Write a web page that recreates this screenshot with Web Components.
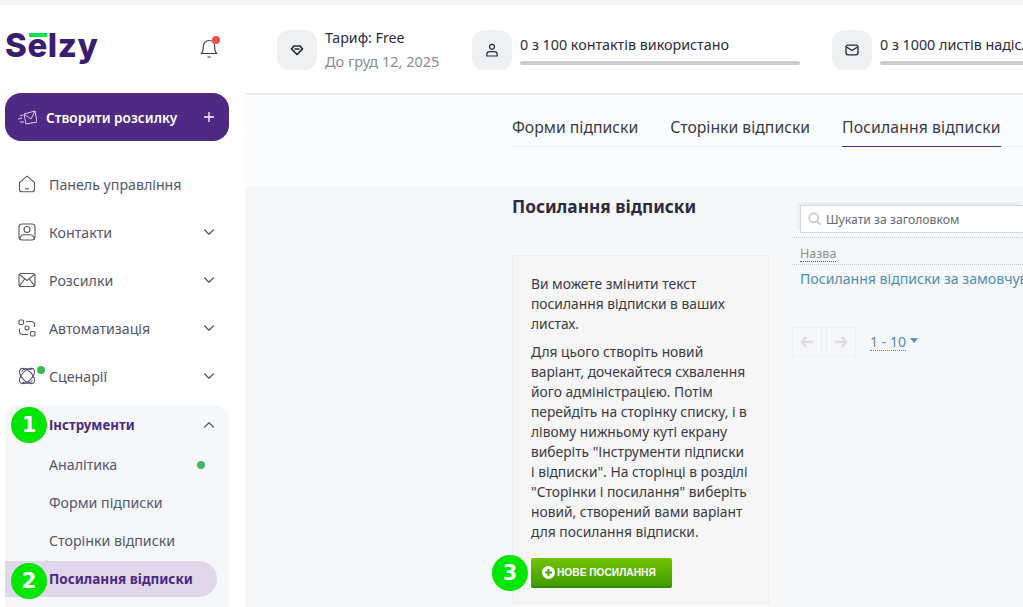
<!DOCTYPE html>
<html lang="uk">
<head>
<meta charset="UTF-8">
<title>Selzy</title>
<style>
    html, body { margin: 0; padding: 0; height: 100%; overflow: hidden; background: #fff; }
    body { font-family: "Noto Sans", "Liberation Sans", sans-serif; color: #2b2b3d; }
</style>
</head>
<body>
<app-shell>
    <side-bar slot="side">
        <nav-item slot="nav" chevron="none" label="Панель управління">
            <svg slot="icon" width="18" height="18" viewBox="0 0 18 18" fill="none" stroke="#55566a" stroke-width="1.1"><path d="M1.500 7.600 9 1.200l7.500 6.400v6.600a2.600 2.600 0 0 1-2.600 2.600H4.100a2.600 2.600 0 0 1-2.600-2.600Z"/><path d="M7 13.800h4"/></svg>
        </nav-item>
        <nav-item slot="nav" chevron="down" label="Контакти">
            <svg slot="icon" width="18" height="18" viewBox="0 0 18 18" fill="none" stroke="#55566a" stroke-width="1.1"><rect x="1" y="1" width="16" height="16" rx="3"/><circle cx="9" cy="6.500" r="3"/><path d="M2 15.500c.5-3 2.500-3.800 4-3.800h6c1.500 0 3.500.8 4 3.800"/></svg>
        </nav-item>
        <nav-item slot="nav" chevron="down" label="Розсилки">
            <svg slot="icon" width="18" height="18" viewBox="0 0 18 18" fill="none" stroke="#55566a" stroke-width="1.1"><rect x="1" y="2.500" width="16" height="13" rx="2"/><path d="m1.500 3.500 7.500 6 7.500-6M1.500 14.800 6.600 8M16.500 14.800 11.400 8"/></svg>
        </nav-item>
        <nav-item slot="nav" chevron="down" label="Автоматизація">
            <svg slot="icon" width="18" height="18" viewBox="0 0 18 18" fill="none" stroke="#55566a" stroke-width="1.1"><rect x="1" y="1" width="4.500" height="4.500" rx="1.200"/><rect x="12.500" y="12.500" width="4.500" height="4.500" rx="1.200"/><circle cx="9" cy="9" r="2"/><path d="M8 2.500h5.500a3 3 0 0 1 3 3V8M10 15.500H4.500a3 3 0 0 1-3-3V9.500"/></svg>
        </nav-item>
        <nav-item slot="nav" chevron="down" label="Сценарії" mark>
            <svg slot="icon" width="18" height="18" viewBox="0 0 18 18" fill="none" stroke="#55566a" stroke-width="1.1"><ellipse cx="9" cy="9" rx="9.500" ry="5" transform="rotate(45 9 9)"/><ellipse cx="9" cy="9" rx="9.500" ry="5" transform="rotate(-45 9 9)"/><path d="M3.500 4.500A7.500 7.500 0 0 1 13.500 3M14.500 13.500A7.500 7.500 0 0 1 4.500 15"/></svg>
        </nav-item>
        <nav-group slot="nav" label="Інструменти">
            <sub-item dot>Аналітика</sub-item>
            <sub-item>Форми підписки</sub-item>
            <sub-item>Сторінки відписки</sub-item>
            <sub-item active>Посилання відписки</sub-item>
        </nav-group>
    </side-bar>

    <top-bar slot="top">
        <plan-stat title-text="Тариф: Free" sub="До груд 12, 2025">
            <svg slot="icon" width="14" height="14" viewBox="0 0 14 14" fill="none" stroke="#24243a" stroke-width="1.700" stroke-linejoin="round"><path d="M4 3h6l2.500 3L7 11.500 1.500 6Z"/><path d="M4.500 6h5" stroke-width="1.500"/></svg>
        </plan-stat>
        <usage-stat text="0 з 100 контактів використано" style="margin-left:32px">
            <svg slot="icon" width="14" height="14" viewBox="0 0 14 14" fill="none" stroke="#24243a" stroke-width="1.200"><circle cx="7" cy="3.800" r="2.500"/><path d="M1.800 13v-1.500c0-1.700 1.300-2.800 3-2.800h4.400c1.700 0 3 1.100 3 2.800V13Z"/></svg>
        </usage-stat>
        <usage-stat text="0 з 1000 листів надіслано" style="margin-left:32px">
            <svg slot="icon" width="14" height="14" viewBox="0 0 14 14" fill="none" stroke="#24243a" stroke-width="1.300"><rect x="1" y="2.200" width="12" height="9.600" rx="2"/><path d="m1.500 4 5.500 3.500L12.500 4"/></svg>
        </usage-stat>
    </top-bar>

    <tab-strip slot="tabs">
        <tab-link>Форми підписки</tab-link>
        <tab-link>Сторінки відписки</tab-link>
        <tab-link active>Посилання відписки</tab-link>
    </tab-strip>

    <help-panel slot="left" heading="Посилання відписки">
        <p>Ви можете змінити текст<br>посилання відписки в ваших<br>листах.</p>
        <p>Для цього створіть новий<br>варіант, дочекайтеся схвалення<br>його адміністрацією. Потім<br>перейдіть на сторінку списку, і в<br>лівому нижньому куті екрану<br>виберіть "Інструменти підписки<br>і відписки". На сторінці в розділі<br>"Сторінки і посилання" виберіть<br>новий, створений вами варіант<br>для посилання відписки.</p>
        <green-button>НОВЕ ПОСИЛАННЯ</green-button>
    </help-panel>

    <link-table slot="right"></link-table>

    <step-mark slot="marks" n="1" style="left:11px;top:407px"></step-mark>
    <step-mark slot="marks" n="2" style="left:11px;top:563px"></step-mark>
    <step-mark slot="marks" n="3" style="left:492px;top:555px"></step-mark>
</app-shell>

<script>
    function define(name, css, html) {
        customElements.define(name, class extends HTMLElement {
            constructor() {
                super();
                const root = this.attachShadow({ mode: "open" });
                root.innerHTML = "<style>" + css + "</style>" + (typeof html === "function" ? html(this) : html);
            }
        });
    }

    const chevron = (d) => '<svg class="chev" width="12" height="8" viewBox="0 0 12 8" fill="none" stroke="#55566a" stroke-width="1.200" stroke-linecap="round" stroke-linejoin="round"><path d="' + d + '"/></svg>';
    const CH_DOWN = "M1.500 1.800 6 6.200l4.500-4.400";
    const CH_UP = "M1.500 6.200 6 1.800l4.500 4.400";

    define("app-shell", `
        :host { display: block; width: 1023px; height: 607px; position: relative; overflow: hidden; background: #fff; }
        .strip { height: 5px; background: #f4f5f5; }
        .wrap { display: grid; grid-template-columns: 245px 1fr; height: 602px; }
        .main { display: flex; flex-direction: column; min-width: 0; overflow: hidden; }
        .tabs { background: #fbfcfe; height: 92px; padding: 0 0 0 267px; box-sizing: border-box; flex: none; overflow: hidden; }
        .body { flex: 1; background: #f6f7f9; padding: 0 0 0 267px; display: grid; grid-template-columns: 257px minmax(0, 1fr); column-gap: 31px; }
    `, `
        <div class="strip"></div>
        <div class="wrap">
            <slot name="side"></slot>
            <div class="main">
                <slot name="top"></slot>
                <div class="tabs"><slot name="tabs"></slot></div>
                <div class="body"><slot name="left"></slot><slot name="right"></slot></div>
            </div>
        </div>
        <slot name="marks"></slot>
    `);

    define("side-bar", `
        :host { display: block; background: #fff; overflow: hidden; }
        .logo-row { height: 88px; display: flex; align-items: center; justify-content: space-between; padding: 0 26px 0 5px; box-sizing: border-box; }
        .logo { position: relative; font: 800 33px/1 "Inter", sans-serif; color: #3a1d6e; letter-spacing: .6px; margin-top: -8px; }
        .logo i { position: absolute; left: 24px; top: 4px; width: 18px; height: 4px; background: #00e64d; }
        .bell { position: relative; width: 20px; height: 22px; margin-top: -2px; }
        .bell b { position: absolute; right: -1px; top: -1px; width: 8px; height: 8px; border-radius: 50%; background: #ee5246; }
        .create { margin: 0 16px 0 5px; height: 48px; border-radius: 16px; background: #4e2a84; color: #fff; display: flex; align-items: center; padding: 0 14px 0 13px; font-size: 13.600px; font-weight: 600; }
        .create span { margin-left: 9px; flex: 1; }
        nav { display: flex; flex-direction: column; margin-top: 19px; }
    `, `
        <div class="logo-row">
            <div class="logo">Selzy<i></i></div>
            <div class="bell">
                <svg width="20" height="22" viewBox="0 0 20 22" fill="none" stroke="#3c3c48" stroke-width="1.100"><path d="M2.500 16.500c1.500-1.500 1.800-3 1.800-6.500 0-3.800 2.200-6.500 5.700-6.500s5.700 2.700 5.700 6.500c0 3.500.3 5 1.800 6.500Z"/><path d="M8.500 20h3"/></svg>
                <b></b>
            </div>
        </div>
        <div class="create">
            <svg width="19" height="15" viewBox="0 0 19 15" fill="none" stroke="#d9cdea" stroke-width="1" stroke-linejoin="round"><path d="m6 4 11-3 2 11-11 2Z"/><path d="m6 4 7 5 4-8M2 6l3-1M0 9l4-1M2 12h4"/></svg>
            <span>Створити розсилку</span>
            <svg width="12" height="12" viewBox="0 0 12 12" stroke="#fff" stroke-width="1.300"><path d="M6 1v10M1 6h10"/></svg>
        </div>
        <nav><slot name="nav"></slot></nav>
    `);

    define("nav-item", `
        :host { display: flex; align-items: center; height: 48px; padding: 0 30px 0 18px; position: relative; font-size: 14.200px; color: #55566a; }
        .ic { width: 18px; height: 18px; margin-right: 13px; display: block; }
        .lb { flex: 1; }
        .mark { position: absolute; left: 37px; top: 14px; width: 8px; height: 8px; border-radius: 50%; background: #3dba55; }
    `, (el) => `
        <slot class="ic" name="icon"></slot>
        <span class="lb">${el.getAttribute("label")}</span>
        ${el.getAttribute("chevron") === "down" ? chevron(CH_DOWN) : ""}
        ${el.hasAttribute("mark") ? '<i class="mark"></i>' : ""}
    `);

    define("nav-group", `
        :host { display: block; margin: 5px 16px 0 5px; background: #f6f7f9; border-radius: 14px 14px 0 0; height: 220px; color: #55566a; }
        .head { display: flex; align-items: center; height: 40px; padding: 0 14px 0 44px; font-size: 13.300px; font-weight: 700; color: #4a2a80; }
        .head span { flex: 1; }
        .list { display: flex; flex-direction: column; padding-top: 1px; }
    `, (el) => `
        <div class="head"><span>${el.getAttribute("label")}</span>${chevron(CH_UP)}</div>
        <div class="list"><slot></slot></div>
    `);

    define("sub-item", `
        :host { display: flex; align-items: center; height: 36px; margin: 1px 12px 1px 0; padding: 0 12px 0 44px; border-radius: 0 18px 18px 0; font-size: 14.200px; color: #55566a; }
        :host([active]) { background: #e0d7ea; color: #4a2a80; font-weight: 700; font-size: 13.500px; }
        span { flex: 1; margin-top: -1px; }
        i { width: 8px; height: 8px; border-radius: 50%; background: #43b85c; }
    `, (el) => `<span><slot></slot></span>${el.hasAttribute("dot") ? "<i></i>" : ""}`);

    define("top-bar", `
        :host { display: flex; align-items: center; height: 90px; box-sizing: border-box; padding: 2px 0 0 32px; background: #fff; border-bottom: 2px solid #eeeff1; white-space: nowrap; overflow: hidden; flex: none; }
    `, `<slot></slot>`);

    const statCss = `
        .tile { width: 40px; height: 40px; border-radius: 12px; background: #eff0f2; display: flex; align-items: center; justify-content: center; flex: none; }
    `;

    define("plan-stat", statCss + `
        :host { display: flex; align-items: center; gap: 8px; width: 163px; flex: none; }
        .t { color: #2b2b3d; line-height: 20px; margin-top: -2px; font-size: 14.200px; }
        .s { color: #8b8b93; line-height: 20px; margin-top: 3px; font-size: 14.500px; }
    `, (el) => `
        <div class="tile"><slot name="icon"></slot></div>
        <div><div class="t">${el.getAttribute("title-text")}</div><div class="s">${el.getAttribute("sub")}</div></div>
    `);

    define("usage-stat", statCss + `
        :host { display: flex; align-items: center; gap: 8px; font-size: 14.300px; flex: none; }
        .t { color: #2b2b3d; line-height: 20px; width: 280px; white-space: nowrap; }
        .bar { width: 280px; height: 4px; border-radius: 2px; background: #cdcdcd; margin-top: 6px; }
    `, (el) => `
        <div class="tile"><slot name="icon"></slot></div>
        <div class="col"><div class="t">${el.getAttribute("text")}</div><div class="bar"></div></div>
    `);

    define("tab-strip", `
        :host { display: flex; gap: 32px; margin-top: 16px; height: 35px; border-bottom: 1px solid #eceef2; }
    `, `<slot></slot>`);

    define("tab-link", `
        :host { display: block; height: 35px; line-height: 32px; font-size: 15.750px; color: #3a3a48; white-space: nowrap; }
        :host([active]) { border-bottom: 1px solid #4e2a84; letter-spacing: .1px; }
    `, `<slot></slot>`);

    define("help-panel", `
        :host { display: block; }
        h2 { margin: 8px 0 0; font-size: 17.300px; line-height: 24px; font-weight: 700; color: #2b2b3d; white-space: nowrap; }
        .box { margin-top: 36px; height: 349px; box-sizing: border-box; background: #f6f6f6; border: 1px solid #eeeeee; padding: 18px 18px 0 18px; font-size: 13.800px; line-height: 20px; color: #3a3a44; white-space: nowrap; }
        ::slotted(p) { margin: 0 0 8px !important; }
    `, (el) => `
        <h2>${el.getAttribute("heading")}</h2>
        <div class="box"><slot></slot></div>
    `);

    define("green-button", `
        :host { display: flex; align-items: center; gap: 2px; width: 141px; height: 30px; margin-top: 16px; box-sizing: border-box; padding-left: 11px; border-radius: 2px; background: linear-gradient(#73c400, #409c00); border-bottom: 2px solid #378a00; color: #fff; font: 700 10.200px "Liberation Sans", sans-serif; white-space: nowrap; }
    `, `
        <svg width="13" height="13" viewBox="0 0 13 13"><circle cx="6.500" cy="6.500" r="6.500" fill="#fff"/><path d="M6.500 3v7M3 6.500h7" stroke="#4da800" stroke-width="2"/></svg>
        <slot></slot>
    `);

    define("link-table", `
        :host { display: block; padding-top: 18px; min-width: 0; font-size: 14.100px; }
        .search { height: 28px; box-sizing: border-box; border: 1px solid #d5d6d8; border-right: 0; background: #fff; box-shadow: -3px -3px 0 0 #eceeef; display: flex; align-items: center; padding-left: 7px; gap: 4px; color: #666a70; font-size: 12.200px; }
        .head { margin: 4px 0 0 -8px; padding-left: 8px; border-top: 1px dotted #c4c6c9; border-bottom: 1px dotted #c4c6c9; height: 26px; display: flex; align-items: flex-end; color: #8e9092; font-size: 12.500px; }
        .head span { border-bottom: 1px dotted #555; line-height: 14px; margin-bottom: 2px; }
        .row { line-height: 28px; color: #4e8fae; white-space: nowrap; }
        .pager { margin: 34px 0 0 -8px; display: flex; align-items: center; gap: 4px; }
        .pg { width: 30px; height: 30px; box-sizing: border-box; border: 1px solid #eeeff1; background: #f6f7f8; display: flex; align-items: center; justify-content: center; }
        .range { margin-left: 10px; color: #4e8fae; border-bottom: 1px dotted #4e8fae; line-height: 17px; margin-top: -1px; }
        .caret { width: 0; height: 0; border: 4px solid transparent; border-top: 5px solid #4e97b5; border-bottom: 0; margin-top: -3px; }
    `, `
        <div class="search">
            <svg width="14" height="14" viewBox="0 0 14 14" fill="none" stroke="#d0d1d3" stroke-width="2"><circle cx="5.800" cy="5.800" r="4.500"/><path d="m9 9 4 4"/></svg>
            <span>Шукати за заголовком</span>
        </div>
        <div class="head"><span>Назва</span></div>
        <div class="row">Посилання відписки за замовчуванням</div>
        <div class="pager">
            <div class="pg"><svg width="14" height="12" viewBox="0 0 14 12" fill="none" stroke="#dcdddf" stroke-width="2.500"><path d="M13 6H2M6.500 1 1.800 6l4.700 5"/></svg></div>
            <div class="pg"><svg width="14" height="12" viewBox="0 0 14 12" fill="none" stroke="#dcdddf" stroke-width="2.500"><path d="M1 6h11M7.500 1l4.700 5-4.700 5"/></svg></div>
            <span class="range">1 - 10</span><i class="caret"></i>
        </div>
    `);

    define("step-mark", `
        :host { position: absolute; width: 36px; height: 36px; border-radius: 50%; background: #00e600; color: #fff; display: flex; align-items: center; justify-content: center; font: 700 21px "DejaVu Sans", sans-serif; }
    `, (el) => `<span>${el.getAttribute("n")}</span>`);
</script>
</body>
</html>
